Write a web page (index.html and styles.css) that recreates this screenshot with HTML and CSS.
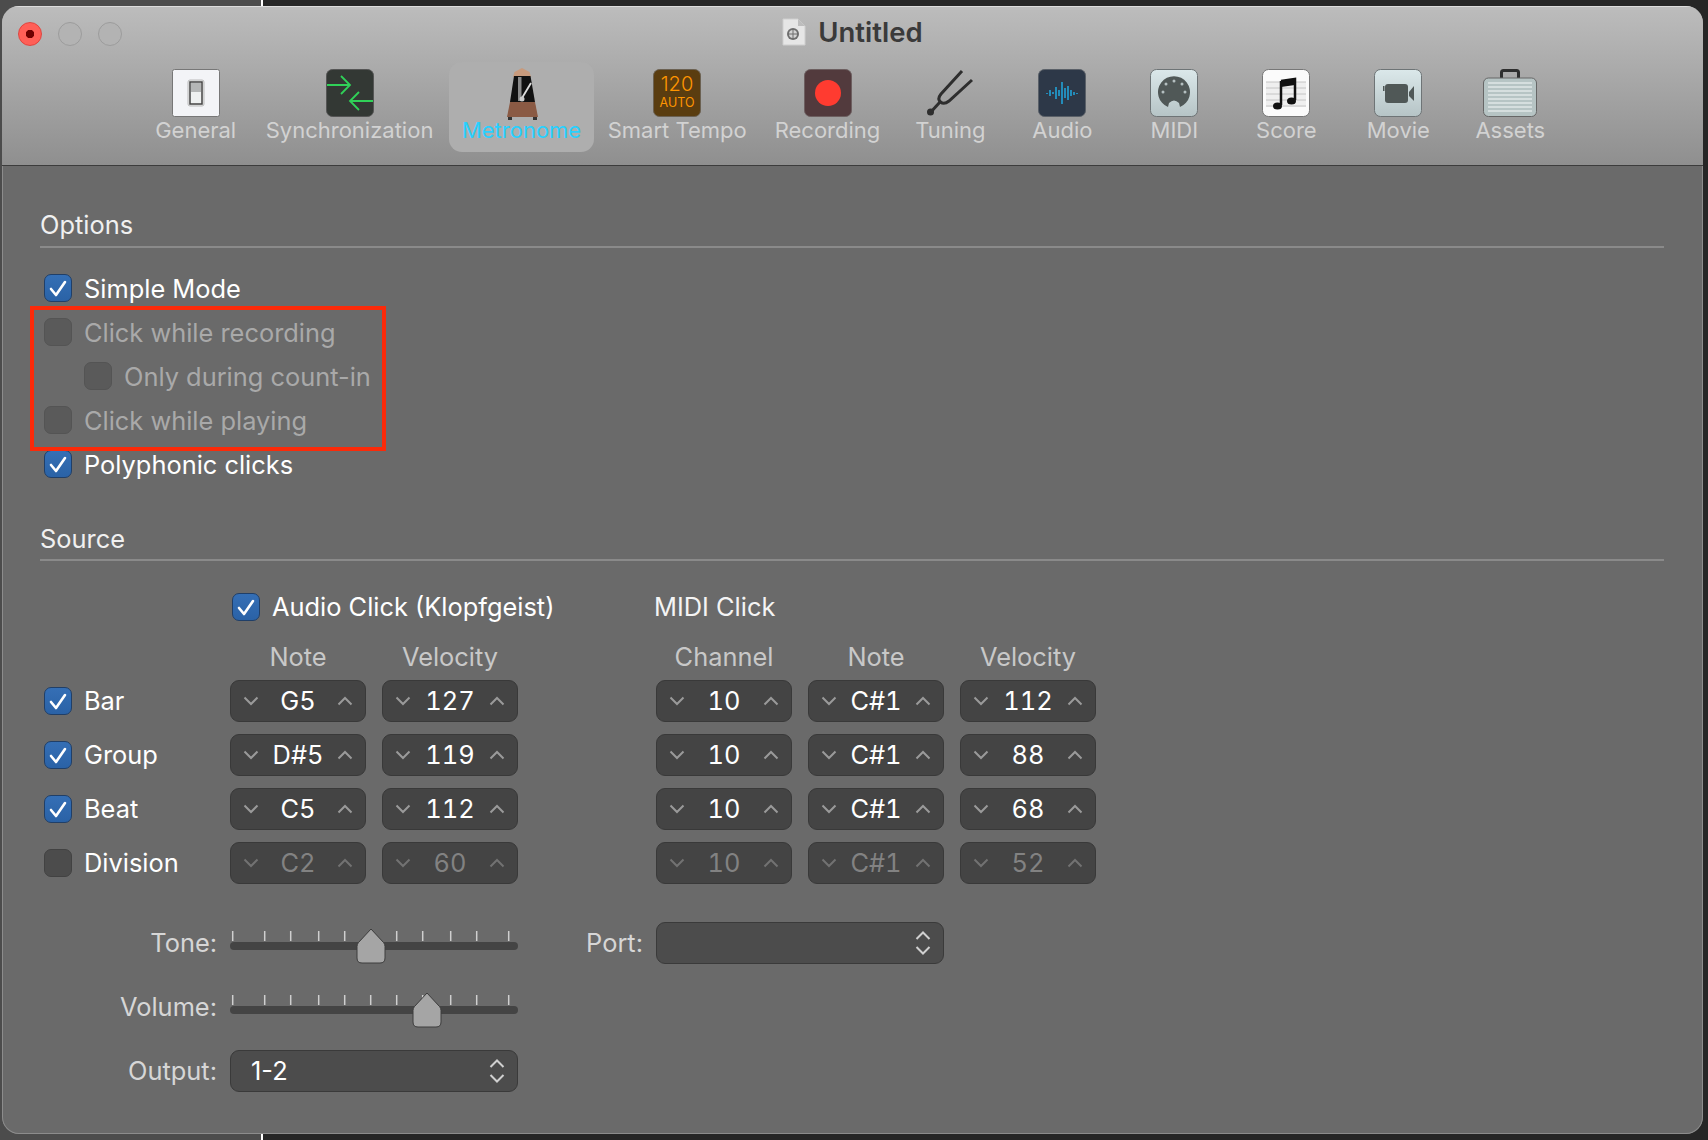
FILE: index.html
```html
<!DOCTYPE html>
<html>
    <head>
        <title>Untitled</title>
        <link rel="stylesheet" href="styles.css">
    </head>
    <body>
        <svg class="defs" width="0" height="0">
            <symbol id="tick" viewBox="0 0 28 28"><path d="M7 15l5 6L21 8" fill="none" stroke="#fff" stroke-width="2.600" stroke-linecap="round" stroke-linejoin="round"/></symbol>
            <symbol id="down" viewBox="0 0 16 10"><path d="M1.500 1.500L8 8l6.500-6.500" fill="none" stroke="currentColor" stroke-width="2"/></symbol>
            <symbol id="up" viewBox="0 0 16 10"><path d="M1.500 8.500L8 2l6.500 6.500" fill="none" stroke="currentColor" stroke-width="2"/></symbol>
            <symbol id="updown" viewBox="0 0 16 26"><path d="M1.500 9L8 2.500l6.500 6.500M1.500 17L8 23.500l6.500-6.500" fill="none" stroke="#d0d0d0" stroke-width="2"/></symbol>
            <symbol id="ticks" viewBox="0 0 288 42"><path d="M2.700 9v10M34.700 9v10M60.700 9v10M88.700 9v10M114.700 9v10M140.700 9v10M166.700 9v10M192.700 9v10M220.700 9v10M246.700 9v10M278.700 9v10" stroke="#cfcfcf" stroke-width="1.500"/><rect x="0" y="20" width="288" height="8" rx="4" fill="#444"/></symbol>
            <symbol id="thumb" viewBox="0 0 30 36"><path d="M15 1L27.500 14.500Q29 16 29 18.500V30Q29 35 24 35H6Q1 35 1 30V18.500Q1 16 2.500 14.500Z" fill="#a5a5a5" stroke="#3c3c3c" stroke-width="1"/></symbol>
        </svg>

        <div class="window">
            <header class="head">
                <div class="titlebar">
                    <div class="lights">
                        <span class="light close"></span>
                        <span class="light"></span>
                        <span class="light"></span>
                    </div>
                    <div class="title">
                        <svg class="docIcon" width="24" height="28" viewBox="0 0 24 28"><path d="M1 1H16L23 8V27H1Z" fill="#e6e6e6" stroke="#cfcfcf"/><path d="M16 1V8H23Z" fill="#bdbdbd"/><circle cx="11" cy="16" r="6" fill="#6e6e6e"/><circle cx="11" cy="16" r="4" fill="#d4d4d4"/><path d="M11 12v8M7 16h8" stroke="#6e6e6e"/></svg>
                        <span>Untitled</span>
                    </div>
                </div>
                <nav class="toolbar">
                    <div class="tool">
                        <svg class="icon" width="48" height="48" viewBox="0 0 48 48"><rect x=".5" y=".5" width="47" height="47" rx="2" fill="#f3f4f7" stroke="#777"/><rect x="16" y="11" width="16" height="26" rx="2" fill="#e8eaea" stroke="#bbb"/><rect x="18" y="13" width="12" height="22" fill="#eef0f0" stroke="#444" stroke-width="1.500"/><rect x="19" y="14" width="10" height="9" fill="#b4b6b6"/></svg>
                        <span>General</span>
                    </div>
                    <div class="tool">
                        <svg class="icon" width="48" height="48" viewBox="0 0 48 48"><rect x=".5" y=".5" width="47" height="47" rx="6" fill="#333834" stroke="#555"/><path d="M1 16H24M15 7l9 9-9 9M47 32H24M33 23l-9 9 9 9" fill="none" stroke="#30d158" stroke-width="1.800"/></svg>
                        <span>Synchronization</span>
                    </div>
                    <div class="tool active">
                        <svg class="icon" width="48" height="52" viewBox="0 0 48 52"><path d="M24 0L31.500 4 33 9H15L16.500 4Z" fill="#c89a7c"/><path d="M16 8H32.500L37 34H12Z" fill="#111"/><rect x="20" y="9" width="3.500" height="24" fill="#8a8a8a"/><path d="M24 30L33 15" stroke="#ddd" stroke-width="1.800"/><circle cx="24" cy="31" r="2.500" fill="#ccc"/><path d="M12 34H37L40 49H9Z" fill="#8a5a44"/><rect x="10" y="49" width="4" height="3" fill="#333"/><rect x="35" y="49" width="4" height="3" fill="#333"/></svg>
                        <span>Metronome</span>
                    </div>
                    <div class="tool">
                        <svg class="icon" width="48" height="48" viewBox="0 0 48 48"><rect x=".5" y=".5" width="47" height="47" rx="6" fill="#5a3d10" stroke="#6b6152"/><text x="24" y="22" text-anchor="middle" class="tempoNum">120</text><text x="24" y="38" text-anchor="middle" class="tempoAuto">AUTO</text></svg>
                        <span>Smart Tempo</span>
                    </div>
                    <div class="tool">
                        <svg class="icon" width="48" height="48" viewBox="0 0 48 48"><rect x=".5" y=".5" width="47" height="47" rx="6" fill="#523a3d" stroke="#6d5f60"/><circle cx="24" cy="24" r="13" fill="#ff3b30"/></svg>
                        <span>Recording</span>
                    </div>
                    <div class="tool">
                        <svg class="icon" width="48" height="48" viewBox="0 0 48 48"><path d="M4 44L14 33" stroke="#2e2e2e" stroke-width="3"/><path d="M36 2L15 25Q11 30 14.500 33T23 32L46 11" fill="none" stroke="#2e2e2e" stroke-width="3"/><circle cx="4.500" cy="43" r="3.500" fill="#2e2e2e"/></svg>
                        <span>Tuning</span>
                    </div>
                    <div class="tool">
                        <svg class="icon" width="48" height="48" viewBox="0 0 48 48"><rect x=".5" y=".5" width="47" height="47" rx="6" fill="#2d3848" stroke="#5a6068"/><path d="M9 24v1M12 21v6M15 23v2M18 18v12M21 21v6M24 13v22M27 19v10M30 17v14M33 21v6M36 23v3M39 24v1" stroke="#20a8e0" stroke-width="1.500"/></svg>
                        <span>Audio</span>
                    </div>
                    <div class="tool">
                        <svg class="icon" width="48" height="48" viewBox="0 0 48 48"><defs><linearGradient id="paleA" x1="0" y1="0" x2="0" y2="1"><stop offset="0" stop-color="#dbe8ea"/><stop offset="1" stop-color="#b6c4c6"/></linearGradient></defs><rect x=".5" y=".5" width="47" height="47" rx="6" fill="url(#paleA)" stroke="#6e7476"/><path d="M18 38A16 16 0 1 1 30 38L29 34Q24 29 19 34Z" fill="#505857"/><g fill="#b4bfc0"><circle cx="24" cy="12" r="1.500"/><circle cx="16" cy="15" r="1.500"/><circle cx="32" cy="15" r="1.500"/><circle cx="13" cy="23" r="1.500"/><circle cx="35" cy="23" r="1.500"/></g></svg>
                        <span>MIDI</span>
                    </div>
                    <div class="tool">
                        <svg class="icon" width="48" height="48" viewBox="0 0 48 48"><rect x=".5" y=".5" width="47" height="47" rx="6" fill="#fbfbfb" stroke="#777"/><rect x="4" y="13" width="40" height="25" fill="#efefef"/><path d="M4 13H44M4 19H44M4 25H44M4 31H44M4 37H44" stroke="#c4c4c4"/><path d="M19 12L33 10V31M19 12V36" fill="none" stroke="#111" stroke-width="2.500"/><path d="M19 12L33 10V16L19 18Z" fill="#111"/><ellipse cx="15.500" cy="37" rx="4.500" ry="3.500" fill="#111"/><ellipse cx="29.500" cy="32" rx="4.500" ry="3.500" fill="#111"/></svg>
                        <span>Score</span>
                    </div>
                    <div class="tool">
                        <svg class="icon" width="48" height="48" viewBox="0 0 48 48"><defs><linearGradient id="paleB" x1="0" y1="0" x2="0" y2="1"><stop offset="0" stop-color="#dbe8ea"/><stop offset="1" stop-color="#b6c4c6"/></linearGradient></defs><rect x=".5" y=".5" width="47" height="47" rx="6" fill="url(#paleB)" stroke="#6e7476"/><rect x="11" y="15" width="23" height="19" rx="3" fill="#505857"/><rect x="9" y="17" width="1.500" height="5" fill="#505857"/><path d="M35 23L40 17V32L35 27Z" fill="#505857"/></svg>
                        <span>Movie</span>
                    </div>
                    <div class="tool">
                        <svg class="icon" width="54" height="48" viewBox="0 0 54 48"><rect x="18.500" y="1.500" width="17" height="9" rx="2" fill="none" stroke="#2e2e2e" stroke-width="3"/><rect x=".5" y="9" width="53" height="38.500" rx="5" fill="#b6c4c4" stroke="#666"/><path d="M5 14H49M5 18H49M5 22H49M5 26H49M5 30H49M5 34H49M5 38H49M5 42H49" stroke="#dfe6e6" stroke-width="1.500"/></svg>
                        <span>Assets</span>
                    </div>
                </nav>
            </header>

            <main class="content">
                <h2 class="sectionTitle">Options</h2>
                <div class="options">
                    <label class="row"><span class="check on"><svg width="28" height="28"><use href="#tick"/></svg></span>Simple Mode</label>
                    <div class="dimGroup">
                        <div class="redBox"></div>
                        <label class="row dim"><span class="check off"></span>Click while recording</label>
                        <label class="row dim nested"><span class="check off"></span>Only during count-in</label>
                        <label class="row dim"><span class="check off"></span>Click while playing</label>
                    </div>
                    <label class="row"><span class="check on"><svg width="28" height="28"><use href="#tick"/></svg></span>Polyphonic clicks</label>
                </div>

                <h2 class="sectionTitle source">Source</h2>
                <div class="clickGrid">
                    <label class="row audioClick"><span class="check on"><svg width="28" height="28"><use href="#tick"/></svg></span>Audio Click (Klopfgeist)</label>
                    <div class="midiClick">MIDI Click</div>

                    <div class="colHead c2">Note</div>
                    <div class="colHead c3">Velocity</div>
                    <div class="colHead c5">Channel</div>
                    <div class="colHead c6">Note</div>
                    <div class="colHead c7">Velocity</div>

                    <label class="row c1"><span class="check on"><svg width="28" height="28"><use href="#tick"/></svg></span>Bar</label>
                    <div class="stepper c2"><svg width="16" height="10"><use href="#down"/></svg><b>G5</b><svg width="16" height="10"><use href="#up"/></svg></div>
                    <div class="stepper c3"><svg width="16" height="10"><use href="#down"/></svg><b>127</b><svg width="16" height="10"><use href="#up"/></svg></div>
                    <div class="stepper c5"><svg width="16" height="10"><use href="#down"/></svg><b>10</b><svg width="16" height="10"><use href="#up"/></svg></div>
                    <div class="stepper c6"><svg width="16" height="10"><use href="#down"/></svg><b>C#1</b><svg width="16" height="10"><use href="#up"/></svg></div>
                    <div class="stepper c7"><svg width="16" height="10"><use href="#down"/></svg><b>112</b><svg width="16" height="10"><use href="#up"/></svg></div>

                    <label class="row c1"><span class="check on"><svg width="28" height="28"><use href="#tick"/></svg></span>Group</label>
                    <div class="stepper c2"><svg width="16" height="10"><use href="#down"/></svg><b>D#5</b><svg width="16" height="10"><use href="#up"/></svg></div>
                    <div class="stepper c3"><svg width="16" height="10"><use href="#down"/></svg><b>119</b><svg width="16" height="10"><use href="#up"/></svg></div>
                    <div class="stepper c5"><svg width="16" height="10"><use href="#down"/></svg><b>10</b><svg width="16" height="10"><use href="#up"/></svg></div>
                    <div class="stepper c6"><svg width="16" height="10"><use href="#down"/></svg><b>C#1</b><svg width="16" height="10"><use href="#up"/></svg></div>
                    <div class="stepper c7"><svg width="16" height="10"><use href="#down"/></svg><b>88</b><svg width="16" height="10"><use href="#up"/></svg></div>

                    <label class="row c1"><span class="check on"><svg width="28" height="28"><use href="#tick"/></svg></span>Beat</label>
                    <div class="stepper c2"><svg width="16" height="10"><use href="#down"/></svg><b>C5</b><svg width="16" height="10"><use href="#up"/></svg></div>
                    <div class="stepper c3"><svg width="16" height="10"><use href="#down"/></svg><b>112</b><svg width="16" height="10"><use href="#up"/></svg></div>
                    <div class="stepper c5"><svg width="16" height="10"><use href="#down"/></svg><b>10</b><svg width="16" height="10"><use href="#up"/></svg></div>
                    <div class="stepper c6"><svg width="16" height="10"><use href="#down"/></svg><b>C#1</b><svg width="16" height="10"><use href="#up"/></svg></div>
                    <div class="stepper c7"><svg width="16" height="10"><use href="#down"/></svg><b>68</b><svg width="16" height="10"><use href="#up"/></svg></div>

                    <label class="row c1"><span class="check blank"></span>Division</label>
                    <div class="stepper off c2"><svg width="16" height="10"><use href="#down"/></svg><b>C2</b><svg width="16" height="10"><use href="#up"/></svg></div>
                    <div class="stepper off c3"><svg width="16" height="10"><use href="#down"/></svg><b>60</b><svg width="16" height="10"><use href="#up"/></svg></div>
                    <div class="stepper off c5"><svg width="16" height="10"><use href="#down"/></svg><b>10</b><svg width="16" height="10"><use href="#up"/></svg></div>
                    <div class="stepper off c6"><svg width="16" height="10"><use href="#down"/></svg><b>C#1</b><svg width="16" height="10"><use href="#up"/></svg></div>
                    <div class="stepper off c7"><svg width="16" height="10"><use href="#down"/></svg><b>52</b><svg width="16" height="10"><use href="#up"/></svg></div>
                </div>

                <div class="outputGrid">
                    <div class="fieldLabel">Tone:</div>
                    <div class="slider">
                        <svg class="sliderBase" width="288" height="42"><use href="#ticks"/></svg>
                        <svg class="thumb toneThumb" width="30" height="36"><use href="#thumb"/></svg>
                    </div>
                    <div class="fieldLabel">Port:</div>
                    <div class="select"><span></span><svg width="16" height="26"><use href="#updown"/></svg></div>

                    <div class="fieldLabel">Volume:</div>
                    <div class="slider">
                        <svg class="sliderBase" width="288" height="42"><use href="#ticks"/></svg>
                        <svg class="thumb volumeThumb" width="30" height="36"><use href="#thumb"/></svg>
                    </div>
                    <div></div>
                    <div></div>

                    <div class="fieldLabel">Output:</div>
                    <div class="select"><span>1-2</span><svg width="16" height="26"><use href="#updown"/></svg></div>
                </div>
            </main>
        </div>
    </body>
</html>
```

FILE: styles.css
```css
html {
    overflow: hidden;
}

body {
    margin: 0;
    height: 1140px;
    overflow: hidden;
    box-sizing: border-box;
    padding: 6px 5px 6px 2px;
    background: linear-gradient(to right, #4c4c4c 0, #4c4c4c 261px, #fff 261px, #fff 263px, #262626 263px);
    font-family: Inter, "Liberation Sans", sans-serif;
    color: #fff;
}

.defs {
    display: block;
    position: absolute;
}

.window {
    height: 1128px;
    background-color: #6a6a6a;
    border-radius: 17px;
    overflow: hidden;
    box-shadow: inset 0 0 0 1px #8c8c8c;
}

/* title bar + toolbar */
.head {
    height: 160px;
    box-sizing: border-box;
    background: linear-gradient(#bcbcbc, #8f8f8f);
    border-top: 1px solid #dcdcdc;
    border-bottom: 1px solid #3c3c3c;
}

.titlebar {
    height: 55px;
    display: grid;
    grid-template-columns: 1fr auto 1fr;
    align-items: center;
    padding-left: 16px;
}

.lights {
    display: flex;
    gap: 16px;
    margin-top: -1px;
}

.light {
    width: 24px;
    height: 24px;
    box-sizing: border-box;
    border-radius: 50%;
    background-color: #b3b3b3;
    border: 1px solid #9c9c9c;
}

.light.close {
    background: radial-gradient(circle, #6e0000 0, #6e0000 4px, #ff5f57 4.500px);
    border-color: #e0443e;
}

.title {
    display: flex;
    align-items: center;
    gap: 12px;
    font-size: 27.500px;
    font-weight: 600;
    color: #3a3a3a;
    margin: -5px 16px 0 0;
}

.toolbar {
    display: flex;
    justify-content: center;
    padding-left: 1px;
}

.tool {
    flex: none;
    min-width: 112px;
    height: 90px;
    box-sizing: border-box;
    padding: 7px 14px 0;
    border-radius: 13px;
    display: flex;
    flex-direction: column;
    align-items: center;
    font-size: 22px;
    color: #d2d2d2;
    white-space: nowrap;
}

.tool .icon {
    flex: none;
    display: block;
}

.tool span {
    line-height: 26px;
}

.tool.active {
    background-color: #aeaeae;
    color: #28d0ff;
    margin-left: 2px;
    padding: 7px 12.500px 0;
}

.tool.active .icon {
    margin: -1px 0 -3px;
}

.tempoNum {
    font-size: 20px;
    font-weight: 300;
    fill: #ff9500;
}

.tempoAuto {
    font-size: 12.500px;
    fill: #ff9500;
}

/* main panel */
.content {
    padding: 0 39px 0 38px;
    font-size: 25.400px;
}

.sectionTitle {
    margin: 0;
    padding-top: 44px;
    height: 36px;
    line-height: 30px;
    font-size: 25.400px;
    font-weight: 400;
    color: #f0f0f0;
    border-bottom: 2px solid #8a8a8a;
}

.sectionTitle.source {
    padding-top: 46px;
    height: 35px;
}

.options {
    margin-top: 26px;
    padding-left: 4px;
    display: flex;
    flex-direction: column;
    gap: 16px;
}

.dimGroup {
    position: relative;
    display: flex;
    flex-direction: column;
    gap: 16px;
}

.redBox {
    position: absolute;
    left: -14px;
    top: -12px;
    width: 356px;
    height: 145px;
    box-sizing: border-box;
    border: 4px solid #fb2a09;
}

.row {
    display: flex;
    align-items: center;
    gap: 12px;
    height: 28px;
    white-space: nowrap;
}

.row.dim {
    color: #a9a9a9;
}

.row.nested {
    margin-left: 40px;
}

.check {
    flex: none;
    width: 28px;
    height: 28px;
    box-sizing: border-box;
    border-radius: 7px;
}

.check svg {
    display: block;
    margin: -1px;
}

.check.on {
    background: linear-gradient(#356fb5, #2a62a6);
    border: 1px solid #203f68;
}

.check.off {
    background-color: #5a5a5a;
    border: 1px solid #545454;
}

.check.blank {
    background-color: #4c4c4c;
    border: 1px solid #424242;
}

/* click table */
.clickGrid {
    margin-top: 32px;
    padding-left: 4px;
    display: grid;
    grid-template-columns: 170px 136px 136px 106px 136px 136px 136px;
    grid-template-rows: 28px 35px repeat(4, 42px);
    column-gap: 16px;
    row-gap: 12px;
    align-items: center;
}

/* text sits a px high in this table */
.clickGrid .row {
    box-sizing: border-box;
    padding-bottom: 2px;
}

.clickGrid .check {
    margin-bottom: -2px;
}

.audioClick {
    grid-column: 2 / 5;
    margin-left: 2px;
}

.midiClick {
    grid-column: 5 / 8;
    margin: -2px 0 0 -2px;
    color: #f4f4f4;
}

.c1 { grid-column: 1; }
.c2 { grid-column: 2; }
.c3 { grid-column: 3; }
.c5 { grid-column: 5; }
.c6 { grid-column: 6; }
.c7 { grid-column: 7; }

.colHead {
    align-self: end;
    line-height: 24px;
    text-align: center;
    color: #c8c8c8;
    margin-bottom: -1px;
}

.stepper {
    height: 42px;
    box-sizing: border-box;
    display: flex;
    align-items: center;
    justify-content: space-between;
    padding: 0 12px 0 12px;
    background-color: #444;
    border: 1px solid #393939;
    border-radius: 9px;
    color: #9a9a9a;
}

.stepper b {
    font-weight: 400;
    font-variant-numeric: tabular-nums;
    color: #fff;
    margin-top: -2px;
}

.stepper.off {
    color: #727272;
}

.stepper.off b {
    color: #828282;
}

/* sliders and selects */
.outputGrid {
    margin-top: 38px;
    padding-left: 4px;
    display: grid;
    grid-template-columns: 173px 288px 112px 288px;
    grid-auto-rows: 42px;
    column-gap: 13px;
    row-gap: 22px;
    align-items: center;
}

.fieldLabel {
    text-align: right;
    color: #d6d6d6;
    margin-top: -2px;
}

.slider {
    position: relative;
    height: 42px;
}

.sliderBase {
    display: block;
}

.thumb {
    position: absolute;
    top: 6px;
}

.toneThumb {
    left: 126px;
}

.volumeThumb {
    left: 182px;
}

.select {
    height: 42px;
    box-sizing: border-box;
    display: flex;
    align-items: center;
    justify-content: space-between;
    padding: 0 12px 0 20px;
    background-color: #4c4c4c;
    border: 1px solid #3a3a3a;
    border-radius: 9px;
    color: #fff;
}

.select span {
    margin-top: -2px;
}

.select svg {
    display: block;
}
```
